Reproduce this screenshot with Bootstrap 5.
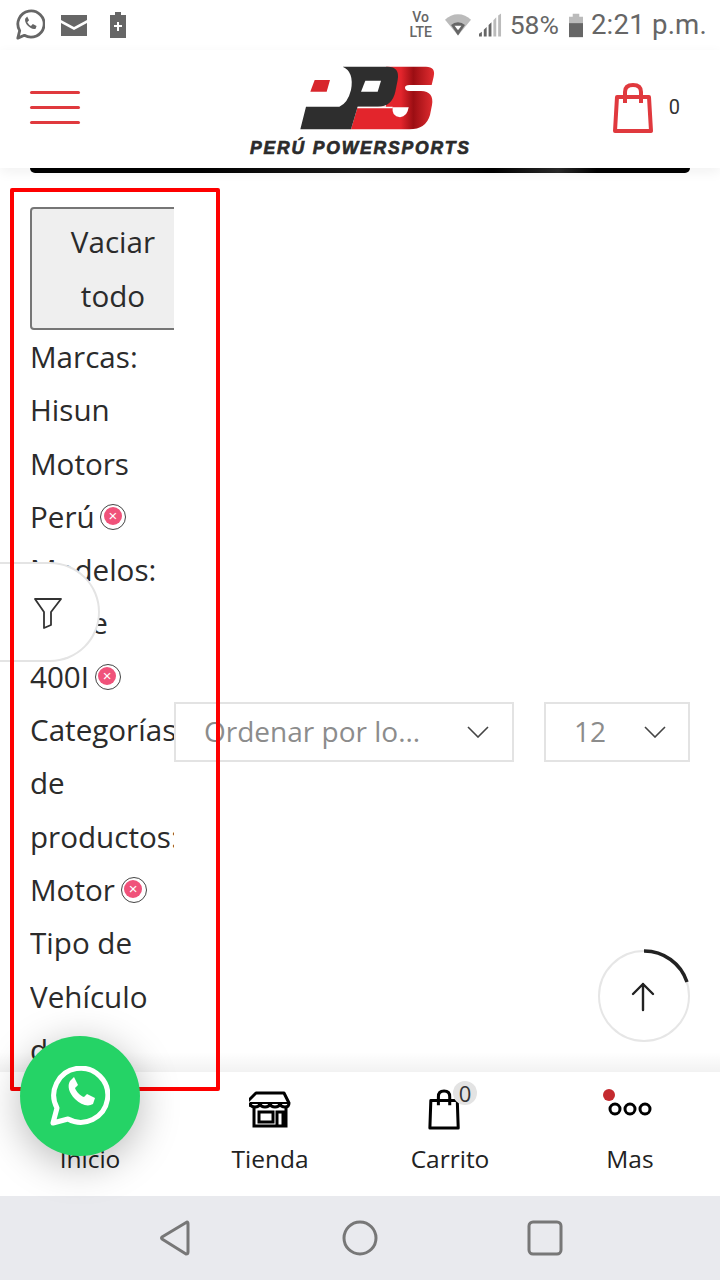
<!DOCTYPE html>
<html lang="en">
<head>
  <meta charset="UTF-8" />
  <meta name="viewport" content="width=device-width, initial-scale=1.0"/>
  <title>Peru Powersports</title>
  <link href="https://cdn.jsdelivr.net/npm/bootstrap@5.3.0/dist/css/bootstrap.min.css" rel="stylesheet">
  <style>
    html, body { height: 1280px; overflow: hidden; }
    body {
      font-family: "Open Sans", "Noto Sans", sans-serif;
      font-size: 29.6px;
      line-height: 53.3px;
      color: #2b2b2b;
      background: #fff;
      position: relative;
    }
    .status-row { height: 50px; padding: 0 13px 0 15px; color: #666; font-family: Roboto, sans-serif; }
    .status-pct { font-size: 26.5px; line-height: 50px; margin-left: 8px; }
    .status-time { font-size: 27.6px; line-height: 50px; margin-left: 8px; letter-spacing: .2px; }
    .volte { font-size: 14px; line-height: 15px; font-weight: 500; width: 26px; text-align: center; }
    .head-row { height: 118px; padding: 0 30px; box-shadow: 0 4px 12px rgba(0,0,0,.06); position: relative; z-index: 3; background: #fff; }
    .burger { margin-top: -4px; }
    .burger span { display: block; width: 50px; height: 3px; background: #e0393e; margin-bottom: 12px; border-radius: 2px; }
    .burger span:last-child { margin-bottom: 0; }
    .logo-wrap { width: 222px; margin-left: 28px; padding-top: 3px; }
    .logo-mark { display: block; margin-left: 50px; }
    .logo-txt {
      font-family: "Liberation Sans", sans-serif; font-weight: 700; font-style: italic;
      font-size: 17.5px; line-height: 16px; margin-top: 10px; color: #2b2b2b; letter-spacing: 1.85px;
      -webkit-text-stroke: .7px #2b2b2b; white-space: nowrap; text-align: center;
    }
    .cart-wrap { margin-right: 10px; margin-top: -2px; }
    .cart-count { font-family: Roboto, sans-serif; font-size: 20px; line-height: 24px; color: #333; margin-left: 16px; margin-top: 12px; }
    .black-strip { height: 5px; margin: 0 30px; background: linear-gradient(to right, #000 25%, #1c1c1c 50%, #000 70%, #2a2a2a 80%, #000 86%); border-radius: 0 0 10px 10px; }
    .main-row { padding: 34px 30px 0; align-items: flex-start; height: 904px; overflow: hidden; }
    .filter-col { width: 144px; flex: none; overflow: hidden; white-space: nowrap; }
    .clear-btn {
      display: block; width: 166px; height: 123px; padding: 0;
      background: #efefef; border: 2px solid #767676; border-radius: 4px;
      color: #2b2b2b; text-align: center; line-height: 53.3px; font-size: 29.6px;
    }
    .rm-icon { display: inline-block; width: 26px; height: 26px; margin-left: -2px; border: 1.5px solid #444; border-radius: 50%; background: #fff; position: relative; vertical-align: -2px; }
    .rm-icon::after {
      content: "\00d7"; position: absolute; left: 2.5px; top: 2.5px; width: 18px; height: 18px; border-radius: 50%;
      background: #f0527a; color: #fff; font: 15px/18px "Liberation Sans", sans-serif; text-align: center;
    }
    .sort-col { margin-top: 495px; gap: 30px; flex: 1; }
    .sort-box {
      height: 60px; border: 2px solid #e3e3e3; color: #8c8c8c; font-size: 28px;
      display: flex; align-items: center; justify-content: space-between; background: #fff;
    }
    .sort-a { width: 340px; padding: 0 23px 0 28px; }
    .sort-b { width: 146px; padding: 0 22px 0 28px; }
    .red-frame { position: absolute; left: 10px; top: 188px; width: 210px; height: 903px; border: 4px solid #fe0000; z-index: 6; border-radius: 2px; }
    .filter-tab { position: absolute; left: -2px; top: 562px; width: 102px; height: 100px; background: #fff; border: 2px solid #e4e4e4; border-left: 0; border-radius: 0 50px 50px 0; z-index: 4; padding: 0 0 5px; }
    .top-btn { position: absolute; left: 596px; top: 947px; z-index: 4; }
    .bottom-nav { position: absolute; left: 0; top: 1072px; width: 720px; height: 124px; background: #fff; z-index: 5; }
    .bottom-nav::before { content: ""; position: absolute; left: 0; right: 0; top: -20px; height: 20px; background: linear-gradient(to bottom, rgba(0,0,0,0), rgba(0,0,0,.05)); }
    .nav-cell { width: 180px; height: 124px; color: #222; font-size: 24.5px; line-height: 32px; position: relative; }
    .nav-cell svg { position: absolute; }
    .nav-lbl { position: absolute; left: 0; right: 0; top: 71px; text-align: center; }
    .cart-bubble { position: absolute; left: 93px; top: 9px; width: 24px; height: 24px; border-radius: 50%; background: #e3e3e3; font-size: 22px; line-height: 24px; text-align: center; color: #333; }
    .red-dot { position: absolute; left: 63px; top: 17px; width: 12px; height: 12px; border-radius: 50%; background: #c42a2f; }
    .wa-btn { position: absolute; left: 20px; top: 1036px; width: 120px; height: 120px; border-radius: 50%; background: #25d366; z-index: 7; box-shadow: 0 8px 40px rgba(0,0,0,.28); }
    .sys-bar { position: absolute; left: 0; top: 1196px; width: 720px; height: 84px; background: #e9eaee; z-index: 5; }
  </style>
</head>
<body>

  <!-- phone status bar -->
  <div class="status-row d-flex align-items-center">
    <svg width="30" height="32" viewBox="0 0 32 34" fill="none" stroke="#666" stroke-width="3"><path d="M3 31l2-8a14 14 0 1 1 5 5z" stroke-linejoin="round"/><path d="M11 10c-1 3 1 6 3 8s5 4 8 3l1-3-4-2-2 2c-2-1-3-3-4-4l2-2-2-4z" fill="#666" stroke="none"/></svg>
    <svg style="margin-left:16px" width="26" height="21" viewBox="0 0 26 21"><path d="M0 0h26v5L13 12 0 5z" fill="#666"/><path d="M0 8l13 7 13-7v13H0z" fill="#666"/></svg>
    <svg style="margin-left:23px" width="16" height="26" viewBox="0 0 16 26"><path d="M5 0h6v3h5v23H0V3h5z" fill="#666"/><path d="M7 10h2v3h3v2H9v4H7v-4H4v-2h3z" fill="#fff"/></svg>
    <div class="ms-auto d-flex align-items-center">
      <div class="volte">Vo<br>LTE</div>
      <svg style="margin-left:11px" width="26" height="22" viewBox="0 0 30 24"><path d="M0 6a21 21 0 0 1 30 0L15 24z" fill="#bbb"/><path d="M7 12a12 12 0 0 1 16 0l-8 12z" fill="#666"/><path d="M11 13h8l-4 5z" fill="#fff"/></svg>
      <svg style="margin-left:8px" width="23" height="24" viewBox="0 0 24 24"><path d="M0 24v-3l3-2v5zM5 24v-7l3-3v10zM10 24V12l3-3v15z" fill="#666"/><path d="M15 24V7l3-3v20zM20 24V2l3-2v24z" fill="#bbb"/></svg>
      <span class="status-pct">58%</span>
      <svg style="margin-left:10px" width="14" height="25" viewBox="0 0 15 25"><path d="M4 0h7v3h4v8H0V3h4z" fill="#bbb"/><path d="M0 10h15v15H0z" fill="#666"/></svg>
      <span class="status-time">2:21 p.m.</span>
    </div>
  </div>

  <!-- site header -->
  <div class="head-row d-flex align-items-center justify-content-between">
    <div class="burger"><span></span><span></span><span></span></div>
    <div class="logo-wrap">
      <svg class="logo-mark" width="138" height="64" viewBox="180 28 412 192">
        <defs><linearGradient id="redg" x1="0" x2="1" y1="0" y2="0"><stop offset="0" stop-color="#e3252c"/><stop offset=".6" stop-color="#e3252c"/><stop offset=".75" stop-color="#9c0e13"/><stop offset="1" stop-color="#e32d31"/></linearGradient></defs>
        <path d="M440 30H560Q590 30 583 60L577 85H510Q497 85 497 93Q497 102 510 103H545Q585 105 578 145L572 175Q560 218 510 218H335L355 150H440z" fill="url(#redg)"/>
        <path d="M310 30H445Q482 30 475 70L468 105Q458 150 415 150H355L335 218H183L200 150H300Q325 140 335 100Q345 45 310 30z" fill="#2e2e2e"/>
        <path d="M378 72H425L415 105H365z" fill="#fff"/>
        <path d="M226 70H272L262 105H213z" fill="#d8262c"/>
        <path d="M460 152H508Q504 180 482 182Q456 180 460 152z" fill="#fff"/>
        <path d="M355 150H460V155H354z" fill="#fff"/>
      </svg>
      <div class="logo-txt">PERÚ POWERSPORTS</div>
    </div>
    <div class="cart-wrap d-flex align-items-start">
      <svg width="40" height="50" viewBox="0 0 40 50" fill="none" stroke="#e0393e" stroke-width="4" stroke-linejoin="round"><path d="M4 14h32l2 34H2z"/><path d="M12 20V9q0-7 8-7t8 7v11"/></svg>
      <span class="cart-count">0</span>
    </div>
  </div>
  <div class="black-strip"></div>

  <!-- filters and sort -->
  <div class="main-row d-flex">
    <div class="filter-col">
      <button type="button" class="clear-btn">Vaciar<br>todo</button>
      <div>Marcas:</div>
      <div>Hisun</div>
      <div>Motors</div>
      <div>Perú <span class="rm-icon"></span></div>
      <div>Modelos:</div>
      <div>Forge</div>
      <div>400I <span class="rm-icon"></span></div>
      <div>Categorías</div>
      <div>de</div>
      <div>productos:</div>
      <div>Motor <span class="rm-icon"></span></div>
      <div>Tipo de</div>
      <div>Vehículo</div>
      <div>de</div>
    </div>
    <div class="sort-col d-flex">
      <div class="sort-box sort-a">
        <span>Ordenar por lo...</span>
        <svg width="22" height="12" viewBox="0 0 22 12" fill="none" stroke="#444" stroke-width="1.6"><path d="M1 1l10 10L21 1"/></svg>
      </div>
      <div class="sort-box sort-b">
        <span>12</span>
        <svg width="22" height="12" viewBox="0 0 22 12" fill="none" stroke="#444" stroke-width="1.6"><path d="M1 1l10 10L21 1"/></svg>
      </div>
    </div>
  </div>

  <div class="red-frame"></div>

  <!-- floating bits -->
  <button type="button" class="filter-tab">
    <svg width="30" height="32" viewBox="0 0 30 32" fill="none" stroke="#333" stroke-width="1.8" stroke-linejoin="round"><path d="M2 2h26L18 15v13l-7 3V15z"/></svg>
  </button>

  <div class="top-btn">
    <svg width="96" height="96" viewBox="0 0 96 96" fill="none">
      <circle cx="48" cy="49" r="45" stroke="#e6e6e6" stroke-width="2"/>
      <path d="M48 4a45 45 0 0 1 43 31" stroke="#222" stroke-width="3.5"/>
      <path d="M47 63V37M37 47l10-10 10 10" stroke="#222" stroke-width="2.4" stroke-linecap="round" stroke-linejoin="round"/>
    </svg>
  </div>

  <!-- bottom menu -->
  <div class="bottom-nav d-flex">
    <div class="nav-cell"><div class="nav-lbl">Inicio</div></div>
    <div class="nav-cell">
      <svg style="left:69px;top:19px" width="42" height="37" viewBox="0 0 42 37" fill="none" stroke="#000" stroke-width="3"><path d="M7 2h28l5 10q0 4-4 4-4 0-5-3-1 3-5 3t-5-3q-1 3-5 3t-5-3q-1 3-5 3t-5-3q-1 3-5 0z" stroke-linejoin="round"/><path d="M5 16v19h32V16M10 21h14v10H10zM28 21h6v14h-6z"/><path d="M1 12h40" stroke-width="2"/></svg>
      <div class="nav-lbl">Tienda</div>
    </div>
    <div class="nav-cell">
      <svg style="left:68px;top:16px" width="34" height="44" viewBox="0 0 36 44" fill="none" stroke="#000" stroke-width="3.2" stroke-linejoin="round"><path d="M3 12h28l1 29H2z"/><path d="M11 17V8q0-6 6-6t6 6v9"/></svg>
      <span class="cart-bubble">0</span>
      <div class="nav-lbl">Carrito</div>
    </div>
    <div class="nav-cell">
      <svg style="left:68px;top:30px" width="44" height="14" viewBox="0 0 44 14" fill="none" stroke="#000" stroke-width="3"><circle cx="7" cy="7" r="5"/><circle cx="22" cy="7" r="5"/><circle cx="37" cy="7" r="5"/></svg>
      <span class="red-dot"></span>
      <div class="nav-lbl">Mas</div>
    </div>
  </div>

  <div class="wa-btn d-flex align-items-center justify-content-center">
    <svg width="60" height="60" viewBox="0 0 60 60" fill="none" stroke="#fff" stroke-width="5"><path d="M3 57l4-15a27 27 0 1 1 11 11z" stroke-linejoin="round"/><path d="M20 15c-3 5-1 12 5 18s13 8 18 5l2-6-8-4-3 3c-4-1-8-6-9-9l3-3-4-8z" fill="#fff" stroke="none"/></svg>
  </div>

  <!-- android nav bar -->
  <div class="sys-bar d-flex align-items-center">
    <svg style="margin-left:159px" width="32" height="36" viewBox="0 0 32 36" fill="none" stroke="#777" stroke-width="3" stroke-linejoin="round"><path d="M28 2q1 0 1 2v28q0 2-2 2L3 19q-1-1 0-2z"/></svg>
    <svg style="margin-left:151px" width="36" height="36" viewBox="0 0 36 36" fill="none" stroke="#777" stroke-width="3"><circle cx="18" cy="18" r="16"/></svg>
    <svg style="margin-left:149px" width="36" height="36" viewBox="0 0 36 36" fill="none" stroke="#777" stroke-width="3"><rect x="2" y="2" width="32" height="32" rx="4"/></svg>
  </div>

  <script src="https://cdn.jsdelivr.net/npm/bootstrap@5.3.0/dist/js/bootstrap.bundle.min.js"></script>
</body>
</html>
